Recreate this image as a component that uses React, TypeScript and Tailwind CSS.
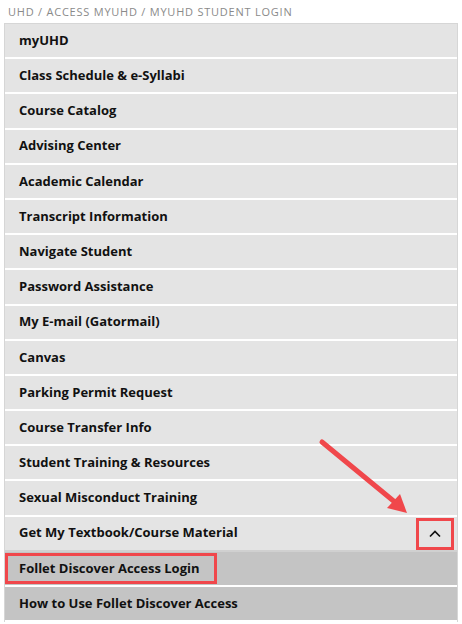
import React from "react";

const items = [
  "myUHD",
  "Class Schedule & e-Syllabi",
  "Course Catalog",
  "Advising Center",
  "Academic Calendar",
  "Transcript Information",
  "Navigate Student",
  "Password Assistance",
  "My E-mail (Gatormail)",
  "Canvas",
  "Parking Permit Request",
  "Course Transfer Info",
  "Student Training & Resources",
  "Sexual Misconduct Training",
];

const subItems = ["Follet Discover Access Login", "How to Use Follet Discover Access"];

export default function App() {
  return (
    <div className="relative w-[462px] h-[624px] overflow-hidden bg-white font-['Open_Sans',sans-serif]">
      {/* Breadcrumb */}
      <div className="h-[23px] pl-[8px] pt-[5px] text-[11px] leading-[14px] tracking-[0.07em] text-[#8a8a8a] uppercase">
        UHD / Access myUHD / myUHD Student Login
      </div>

      {/* Menu */}
      <div className="ml-[4px] w-[454px] border border-[#d6d6d6] border-b-0">
        {items.map((label) => (
          <div
            key={label}
            className="h-[35.2px] flex items-center pl-[14px] bg-[#e4e4e4] border-b-2 border-white text-[13px] font-bold text-[#111]"
          >
            {label}
          </div>
        ))}

        <div className="h-[35.2px] flex items-center justify-between pl-[14px] pr-[3px] bg-[#e4e4e4] border-b-2 border-[#d0d0d0] text-[13px] font-bold text-[#111]">
          <span>Get My Textbook/Course Material</span>
          <div className="relative w-[38px] h-[32px] mt-[2px] flex items-center justify-center border-[3px] border-[#f0474b]">
            <svg width="12" height="8" viewBox="0 0 12 8" fill="none">
              <path d="M1 6.5 L6 1.5 L11 6.5" stroke="#111" strokeWidth="1.7" />
            </svg>
          </div>
        </div>

        {subItems.map((label, i) => (
          <div
            key={label}
            className="h-[35.2px] flex items-center bg-[#c4c4c4] border-b-2 border-white text-[13px] font-bold text-[#111]"
          >
            {i === 0 ? (
              <div className="h-[31px] w-[212px] flex items-center pl-[11px] border-[3px] border-[#f0474b]">
                {label}
              </div>
            ) : (
              <span className="pl-[14px]">{label}</span>
            )}
          </div>
        ))}
      </div>

      {/* Annotation arrow */}
      <svg className="absolute left-0 top-0 pointer-events-none" width="462" height="624" viewBox="0 0 462 624">
        <line x1="322" y1="442" x2="396" y2="503" stroke="#f0474b" strokeWidth="5" strokeLinecap="round" />
        <polygon points="407,513 387,508 400,494" fill="#f0474b" />
      </svg>
    </div>
  );
}
